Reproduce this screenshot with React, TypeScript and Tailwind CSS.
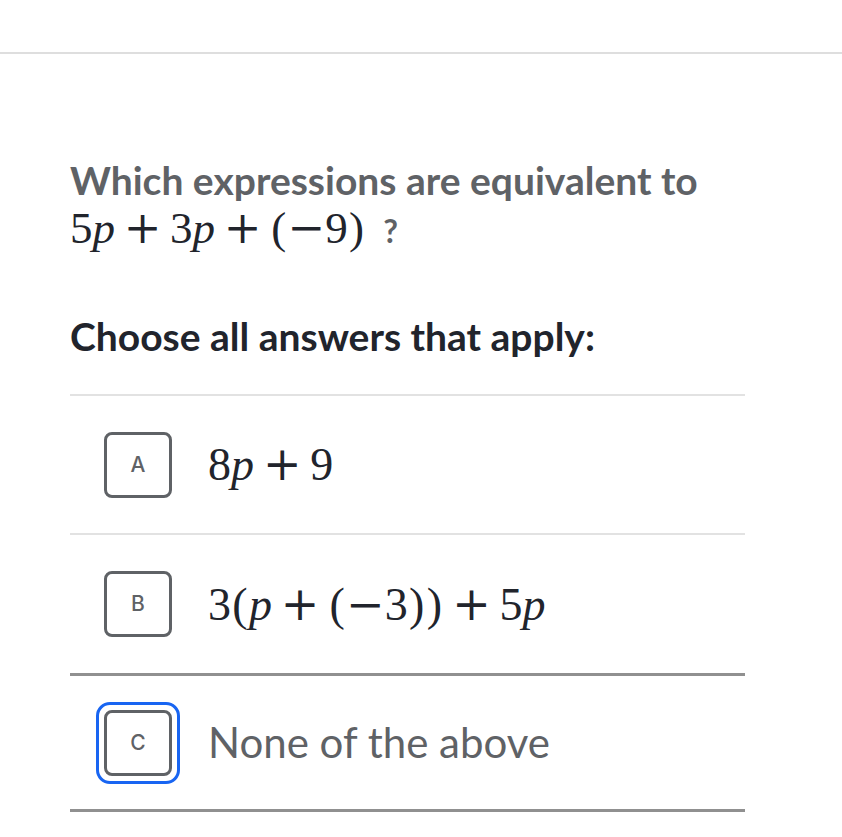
const lato = "font-['Lato','Noto_Sans',sans-serif]";
const serif = "font-['Liberation_Serif','Times_New_Roman',serif]";

// KaTeX-like widths for the glyphs Times draws narrower
function Bin({ children }: { children: React.ReactNode }) {
  return (
    <span className="mx-[0.19em] inline-block w-[0.84em] text-center font-['DejaVu_Serif',serif]">
      {children}
    </span>
  );
}
function Minus() {
  return (
    <span className="inline-block w-[0.84em] text-center font-['DejaVu_Serif',serif]">−</span>
  );
}
function L() {
  return <span className="inline-block w-[0.389em] text-center">(</span>;
}
function R() {
  return <span className="inline-block w-[0.389em] text-center">)</span>;
}
function P() {
  return <i className="inline-block w-[0.503em]">p</i>;
}

function LetterBox({ letter }: { letter: string }) {
  return (
    <div className="flex h-[66px] w-[68px] items-center justify-center rounded-[8px] border-[3px] border-[#5f6266] bg-white font-['Inter',sans-serif] text-[21px] font-medium text-[#5f6266]">
      {letter}
    </div>
  );
}

function Choice({
  letter,
  children,
  focused,
  rowClass,
}: {
  letter: string;
  children: React.ReactNode;
  focused?: boolean;
  rowClass: string;
}) {
  return (
    <div className={`flex items-center pl-[26px] ${rowClass}`}>
      {focused ? (
        <div className="rounded-[14px] border-[3px] border-[#1865f2] p-[5px]">
          <LetterBox letter={letter} />
        </div>
      ) : (
        <div className="p-[8px]">
          <LetterBox letter={letter} />
        </div>
      )}
      <div className="ml-[28px] whitespace-nowrap">{children}</div>
    </div>
  );
}

export default function App() {
  return (
    <div className={`min-h-screen bg-white ${lato}`}>
      <div className="h-[52px]" />
      <div className="h-[2px] bg-[#dedede]" />
      <div className="pl-[70px] pr-[97px] pt-[103px]">
        <p className="whitespace-nowrap text-[39px] font-bold leading-[46px] text-[#5f6266]">
          Which expressions are equivalent to
        </p>
        <p className="flex h-[50px] items-baseline leading-[50px]">
          <span className={`${serif} whitespace-nowrap text-[45px] text-[#21242c]`}>
            5<P />
            <Bin>+</Bin>3<P />
            <Bin>+</Bin>
            <L />
            <Minus />9<R />
          </span>
          <span className="ml-[18px] text-[32px] font-bold text-[#5f6266]">?</span>
        </p>
        <p className="mt-[60px] whitespace-nowrap text-[39px] font-bold leading-[46px] text-[#21242c]">
          Choose all answers that apply:
        </p>
        <div className="mt-[35px] border-t-2 border-[#e2e2e2]">
          <Choice letter="A" rowClass="h-[139px] border-b-2 border-[#e2e2e2]">
            <span className={`${serif} text-[46px] text-[#21242c]`}>
              8<P />
              <Bin>+</Bin>9
            </span>
          </Choice>
          <Choice letter="B" rowClass="h-[141px] border-b-[3px] border-[#909090]">
            <span className={`${serif} text-[46px] text-[#21242c]`}>
              3<L />
              <P />
              <Bin>+</Bin>
              <L />
              <Minus />3<R />
              <R />
              <Bin>+</Bin>5<P />
            </span>
          </Choice>
          <Choice letter="C" focused rowClass="h-[136px] border-b-[3px] border-[#909090]">
            <span className="text-[42px] text-[#5f6266]">None of the above</span>
          </Choice>
        </div>
      </div>
    </div>
  );
}
